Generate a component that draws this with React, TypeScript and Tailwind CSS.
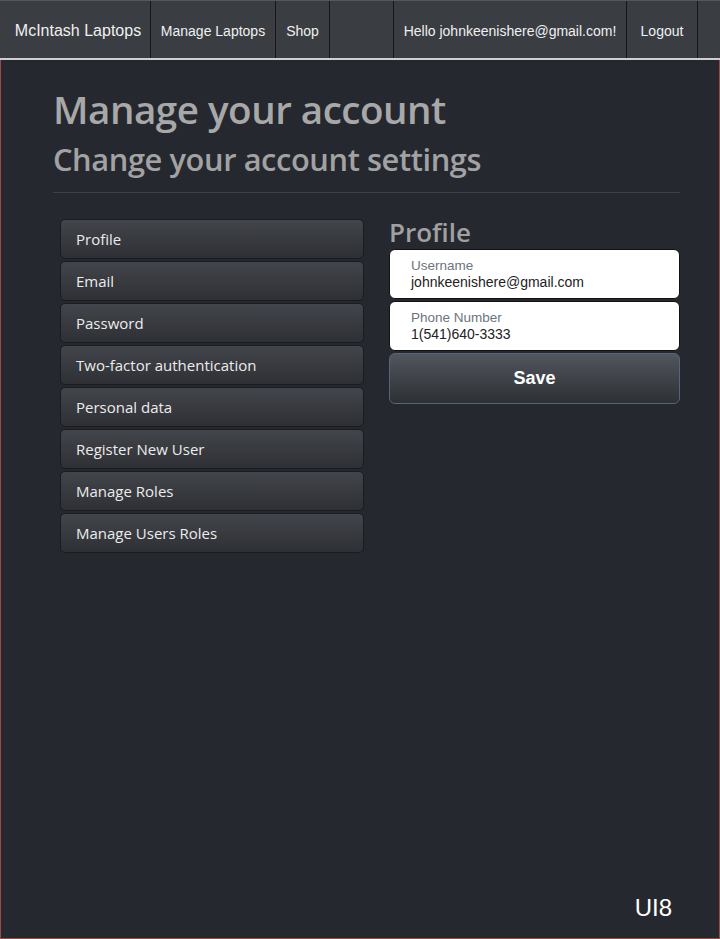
import React from 'react';

const menuItems = [
  'Profile',
  'Email',
  'Password',
  'Two-factor authentication',
  'Personal data',
  'Register New User',
  'Manage Roles',
  'Manage Users Roles',
];

const navItems = [
  { label: 'McIntash Laptops', w: 'w-[151px]', size: 'text-[16px] pl-[6px]' },
  { label: 'Manage Laptops', w: 'w-[125px]', size: 'text-[14px]' },
  { label: 'Shop', w: 'w-[54px]', size: 'text-[14px]' },
  { label: '', w: 'w-[64px]', size: 'text-[14px]' },
  { label: 'Hello johnkeenishere@gmail.com!', w: 'w-[233px]', size: 'text-[14px]' },
  { label: 'Logout', w: 'w-[71px]', size: 'text-[14px]' },
];

export default function App() {
  return (
    <div className="flex h-[939px] w-[720px] flex-col bg-[#25282f] font-['Liberation_Sans',Arial,sans-serif]">
      {/* Top nav */}
      <nav className="flex h-[60px] shrink-0 border-t border-b-2 border-t-[#55585c] border-b-[#d0d0d0] bg-[#3a3d42]">
        {navItems.map(item => (
          <div
            key={item.label + item.w}
            className={`flex h-full items-center justify-center border-r border-[#15161a] pt-[3px] text-[#f0f0f0] ${item.w} ${item.size}`}
          >
            {item.label}
          </div>
        ))}
      </nav>

      {/* Main */}
      <main className="flex flex-1 flex-col border-x border-b border-[#9a4a44] pl-[52px] pr-[39px] font-['Open_Sans','Noto_Sans',sans-serif]">
        <h1 className="mt-[26px] text-[38.6px] leading-[46px] font-semibold text-[#a8a8a8] tracking-[-0.5px]">Manage your account</h1>
        <h2 className="mt-[8px] text-[30.8px] leading-[38px] font-semibold text-[#a2a2a2] tracking-[-0.4px]">Change your account settings</h2>
        <hr className="mt-[14px] border-t border-[#3e4149]" />

        <div className="mt-[26px] flex items-start">
          {/* Side menu */}
          <div className="ml-[7px] flex w-[304px] shrink-0 flex-col gap-[2px]">
            {menuItems.map(item => (
              <div
                key={item}
                className="flex h-[40px] items-center rounded-[5px] border border-[#1b1c20] bg-gradient-to-b from-[#42454b] to-[#2e3035] px-[15px] text-[15px] text-[#ececec]"
              >
                {item}
              </div>
            ))}
          </div>

          {/* Profile form */}
          <div className="ml-[25px] flex w-[291px] shrink-0 flex-col">
            <h3 className="-mt-[4px] text-[26px] leading-[34px] font-semibold text-[#a0a0a0]">Profile</h3>
            <div className="flex h-[50px] flex-col justify-center rounded-[6px] border border-[#111] bg-white px-[21px] font-['Liberation_Sans',Arial,sans-serif]">
              <span className="text-[13.5px] leading-[16px] text-[#6c757d]">Username</span>
              <span className="text-[14px] leading-[17px] text-[#222]">johnkeenishere@gmail.com</span>
            </div>
            <div className="mt-[2px] flex h-[50px] flex-col justify-center rounded-[6px] border border-[#111] bg-white px-[21px] font-['Liberation_Sans',Arial,sans-serif]">
              <span className="text-[13.5px] leading-[16px] text-[#6c757d]">Phone Number</span>
              <span className="text-[14px] leading-[17px] text-[#222]">1(541)640-3333</span>
            </div>
            <button className="mt-[2px] flex h-[51px] items-center justify-center rounded-[6px] border border-[#55657c] bg-gradient-to-b from-[#52565d] to-[#2d3035] font-['Liberation_Sans',Arial,sans-serif] text-[18px] font-bold text-white">
              Save
            </button>
          </div>
        </div>

        <div className="mt-auto mb-[16px] flex justify-end">
          <span className="mr-[8px] font-['Liberation_Sans',Arial,sans-serif] text-[24px] leading-[28px] text-white">UI8</span>
        </div>
      </main>
    </div>
  );
}
